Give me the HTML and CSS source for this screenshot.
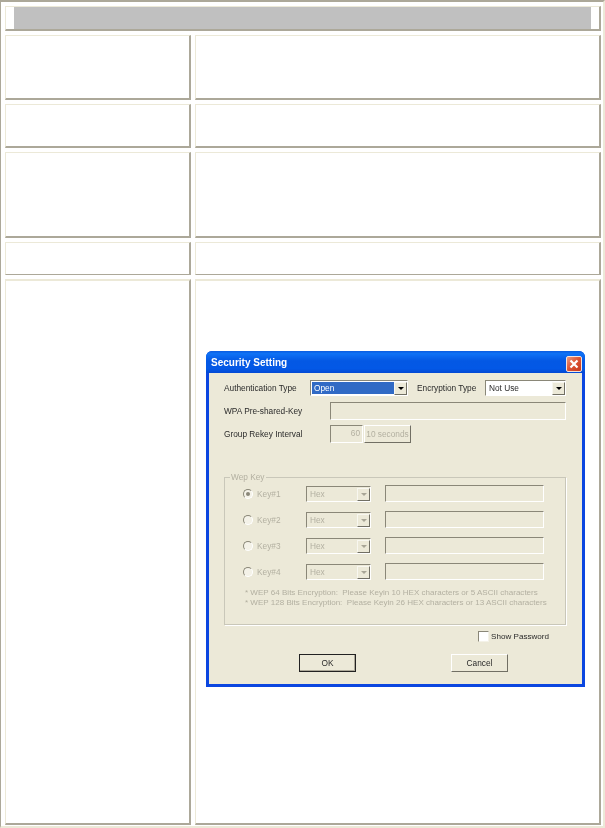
FILE: index.html
```html
<!DOCTYPE html>
<html lang="en">
<head>
<meta charset="utf-8">
<title>Security Setting</title>
<link rel="stylesheet" href="styles.css">
</head>
<body>
<main class="frame">
  <div class="cell head"><div class="head-fill"></div></div>
  <div class="cell"></div><div class="cell"></div>
  <div class="cell"></div><div class="cell"></div>
  <div class="cell"></div><div class="cell"></div>
  <div class="cell thin"></div><div class="cell thin"></div>
  <div class="cell tall"></div>
  <div class="cell tall dialog-cell">
    <section class="dialog">
      <header class="titlebar">
        <span class="title">Security Setting</span>
        <span class="close"><svg width="14" height="14" viewBox="0 0 14 14"><path d="M3.5 3.5l7 7M10.5 3.5l-7 7" stroke="#fff" stroke-width="2.2" fill="none"/></svg></span>
      </header>
      <div class="body">
        <div class="row row-auth">
          <span class="label w-auth">Authentication Type</span>
          <span class="select sel-auth"><span class="sel-text selected">Open</span><span class="arrow"><i></i></span></span>
          <span class="label w-enc">Encryption Type</span>
          <span class="select sel-enc"><span class="sel-text">Not Use</span><span class="arrow"><i></i></span></span>
        </div>
        <div class="row row-wpa">
          <span class="label w-wpa">WPA Pre-shared-Key</span>
          <span class="field f-wpa"></span>
        </div>
        <div class="row row-rekey">
          <span class="label w-wpa">Group Rekey Interval</span>
          <span class="field f-int">60</span>
          <span class="btn-off">10 seconds</span>
        </div>
        <fieldset class="group">
          <legend class="legend">Wep Key</legend>
          <div class="key-row">
            <span class="radio on"></span><span class="key-label">Key#1</span>
            <span class="select off sel-key"><span class="sel-text">Hex</span><span class="arrow"><i></i></span></span>
            <span class="field f-key"></span>
          </div>
          <div class="key-row">
            <span class="radio"></span><span class="key-label">Key#2</span>
            <span class="select off sel-key"><span class="sel-text">Hex</span><span class="arrow"><i></i></span></span>
            <span class="field f-key"></span>
          </div>
          <div class="key-row">
            <span class="radio"></span><span class="key-label">Key#3</span>
            <span class="select off sel-key"><span class="sel-text">Hex</span><span class="arrow"><i></i></span></span>
            <span class="field f-key"></span>
          </div>
          <div class="key-row">
            <span class="radio"></span><span class="key-label">Key#4</span>
            <span class="select off sel-key"><span class="sel-text">Hex</span><span class="arrow"><i></i></span></span>
            <span class="field f-key"></span>
          </div>
          <p class="note">* WEP 64 Bits Encryption:&nbsp; Please Keyin 10 HEX characters or 5 ASCII characters<br>* WEP 128 Bits Encryption:&nbsp; Please Keyin 26 HEX characters or 13 ASCII characters</p>
        </fieldset>
        <label class="show"><span class="check"></span><span>Show Password</span></label>
        <div class="actions">
          <span class="btn default">OK</span>
          <span class="btn">Cancel</span>
        </div>
      </div>
    </section>
  </div>
</main>
</body>
</html>
```
FILE: styles.css
```css
* { box-sizing: border-box; }
html, body { margin: 0; background: #fff; }
.frame {
  width: 605px; height: 828px;
  border-top: 2px solid #aca899;
  border-left: 1px solid #aca899;
  border-right: 2px solid #ece9d8;
  border-bottom: 2px solid #ece9d8;
  padding: 4px 2px 0 4px;
  display: grid;
  grid-template-columns: 186px 406px;
  grid-template-rows: 25px 65px 44px 86px 33px 546px;
  gap: 4px;
  font-family: "Liberation Sans", Arial, sans-serif;
}
.cell {
  background: #fff;
  border-top: 1px solid #ece9d8;
  border-left: 1px solid #ece9d8;
  border-right: 2px solid #aca899;
  border-bottom: 2px solid #aca899;
}
.head { grid-column: 1 / 3; padding: 0 8px; }
.head-fill { height: 100%; background: #c0c0c0; }
.thin { border-bottom-width: 1px; }
.tall { border-top-width: 2px; }
.dialog-cell { padding: 70px 0 0 10px; }

.dialog {
  width: 379px; height: 336px;
  border-radius: 6px 6px 0 0;
  background: #0b46e0;
  padding: 0 3px 3px;
  display: flex; flex-direction: column;
  filter: blur(0.4px);
}
.titlebar {
  height: 22px; flex: none;
  margin: 0 -3px;
  padding: 0 3px 0 5px;
  border-radius: 6px 6px 0 0;
  background: linear-gradient(#0a5ce0 0, #0f72f5 12%, #0458e4 45%, #0358e6 80%, #0349d4 100%);
  display: flex; align-items: center; justify-content: space-between;
}
.title { color: #fff; font-size: 10px; font-weight: 700; }
.close {
  width: 16px; height: 16px;
  border: 1px solid #f6e2da; border-radius: 2px;
  background: linear-gradient(135deg, #ec9a7e, #dc5232 50%, #c53a1e);
  display: flex; align-items: center; justify-content: center;
  margin-top: 4px;
}
.close svg { flex: none; }
.body {
  flex: 1; background: #ece9d8;
  padding: 7px 16px 0 15px;
  font-size: 8.3px; color: #2a2a2a;
  display: flex; flex-direction: column;
}
.row { display: flex; align-items: center; flex: none; }
.row-auth { height: 16px; }
.row-wpa { height: 18px; margin-top: 6px; }
.row-rekey { height: 18px; margin-top: 5px; }
.w-auth { width: 86px; }
.w-wpa { width: 106px; }
.w-enc { width: 68px; margin-left: 9px; }

.select {
  height: 16px; display: flex; align-items: stretch;
  background: #fff;
  border-top: 1px solid #8a8778; border-left: 1px solid #8a8778;
  border-right: 1px solid #fff; border-bottom: 1px solid #fff;
  padding: 1px 0 0 1px;
}
.sel-auth { width: 98px; }
.sel-enc { width: 81px; }
.sel-key { width: 65px; }
.sel-text { flex: 1; padding-left: 2px; line-height: 12px; margin-bottom: 1px; }
.selected { background: #316ac5; color: #fff; }
.arrow {
  width: 13px; background: #ece9d8;
  border: 1px solid; border-color: #f8f7f0 #716f64 #716f64 #f8f7f0;
  display: flex; align-items: center; justify-content: center;
}
.arrow i {
  width: 0; height: 0;
  border-left: 3px solid transparent; border-right: 3px solid transparent;
  border-top: 3px solid #000;
}
.field {
  display: block; height: 18px;
  border-top: 1px solid #8a8778; border-left: 1px solid #8a8778;
  border-right: 1px solid #fff; border-bottom: 1px solid #fff;
}
.f-wpa { width: 236px; }
.f-int { width: 33px; text-align: right; padding-right: 2px; color: #b3b0a1; line-height: 15px; }
.btn-off {
  width: 47px; height: 18px; margin-left: 1px;
  border: 1px solid; border-color: #fff #716f64 #716f64 #fff;
  color: #b3b0a1; text-align: center; line-height: 16px; white-space: nowrap;
}

.group {
  margin: 29px 0 0; padding: 0 0 0 18px;
  height: 153px; width: 342px; flex: none;
  border: 1px solid #c9c7b9; box-shadow: 1px 1px 0 #fff;
  color: #b3b0a1; min-width: 0;
}
.legend { padding: 0 1px; margin-left: -13px; line-height: 10px; color: #b3b0a1; }
.key-row { height: 17px; display: flex; align-items: center; margin-bottom: 9px; }
.key-row:first-of-type { margin-top: 3px; }
.radio {
  width: 10px; height: 10px; border-radius: 50%;
  border: 1px solid; border-color: #8a8778 #fff #fff #8a8778;
  background: #f4f2e8; display: flex; align-items: center; justify-content: center; flex: none;
}
.radio.on::after { content: ""; width: 4px; height: 4px; border-radius: 50%; background: #8a8778; }
.key-label { width: 53px; padding-left: 4px; flex: none; }
.off { background: #ece9d8; }
.off .sel-text { color: #b3b0a1; }
.off .arrow i { border-top-color: #a8a596; }
.f-key { width: 159px; height: 17px; margin-left: 14px; }
.note { margin: -1px 0 0 2px; line-height: 10px; white-space: nowrap; font-size: 8.05px; color: #b3b0a1; }

.show { display: flex; align-items: center; flex: none; margin: 5px 0 0 254px; height: 12px; color: #2a2a2a; font-size: 8.1px; }
.check {
  width: 11px; height: 11px; background: #fff; margin-right: 2px;
  border: 1px solid; border-color: #8a8778 #f4f2e8 #f4f2e8 #8a8778;
}
.actions { display: flex; flex: none; margin: 12px 0 0 75px; gap: 95px; }
.btn {
  width: 57px; height: 18px; text-align: center; line-height: 16px;
  border: 1px solid; border-color: #fff #716f64 #716f64 #fff;
  background: #ece9d8; color: #2a2a2a;
}
.btn.default { border: 1px solid #222; box-shadow: inset -1px -1px 0 #aca899; }
```
